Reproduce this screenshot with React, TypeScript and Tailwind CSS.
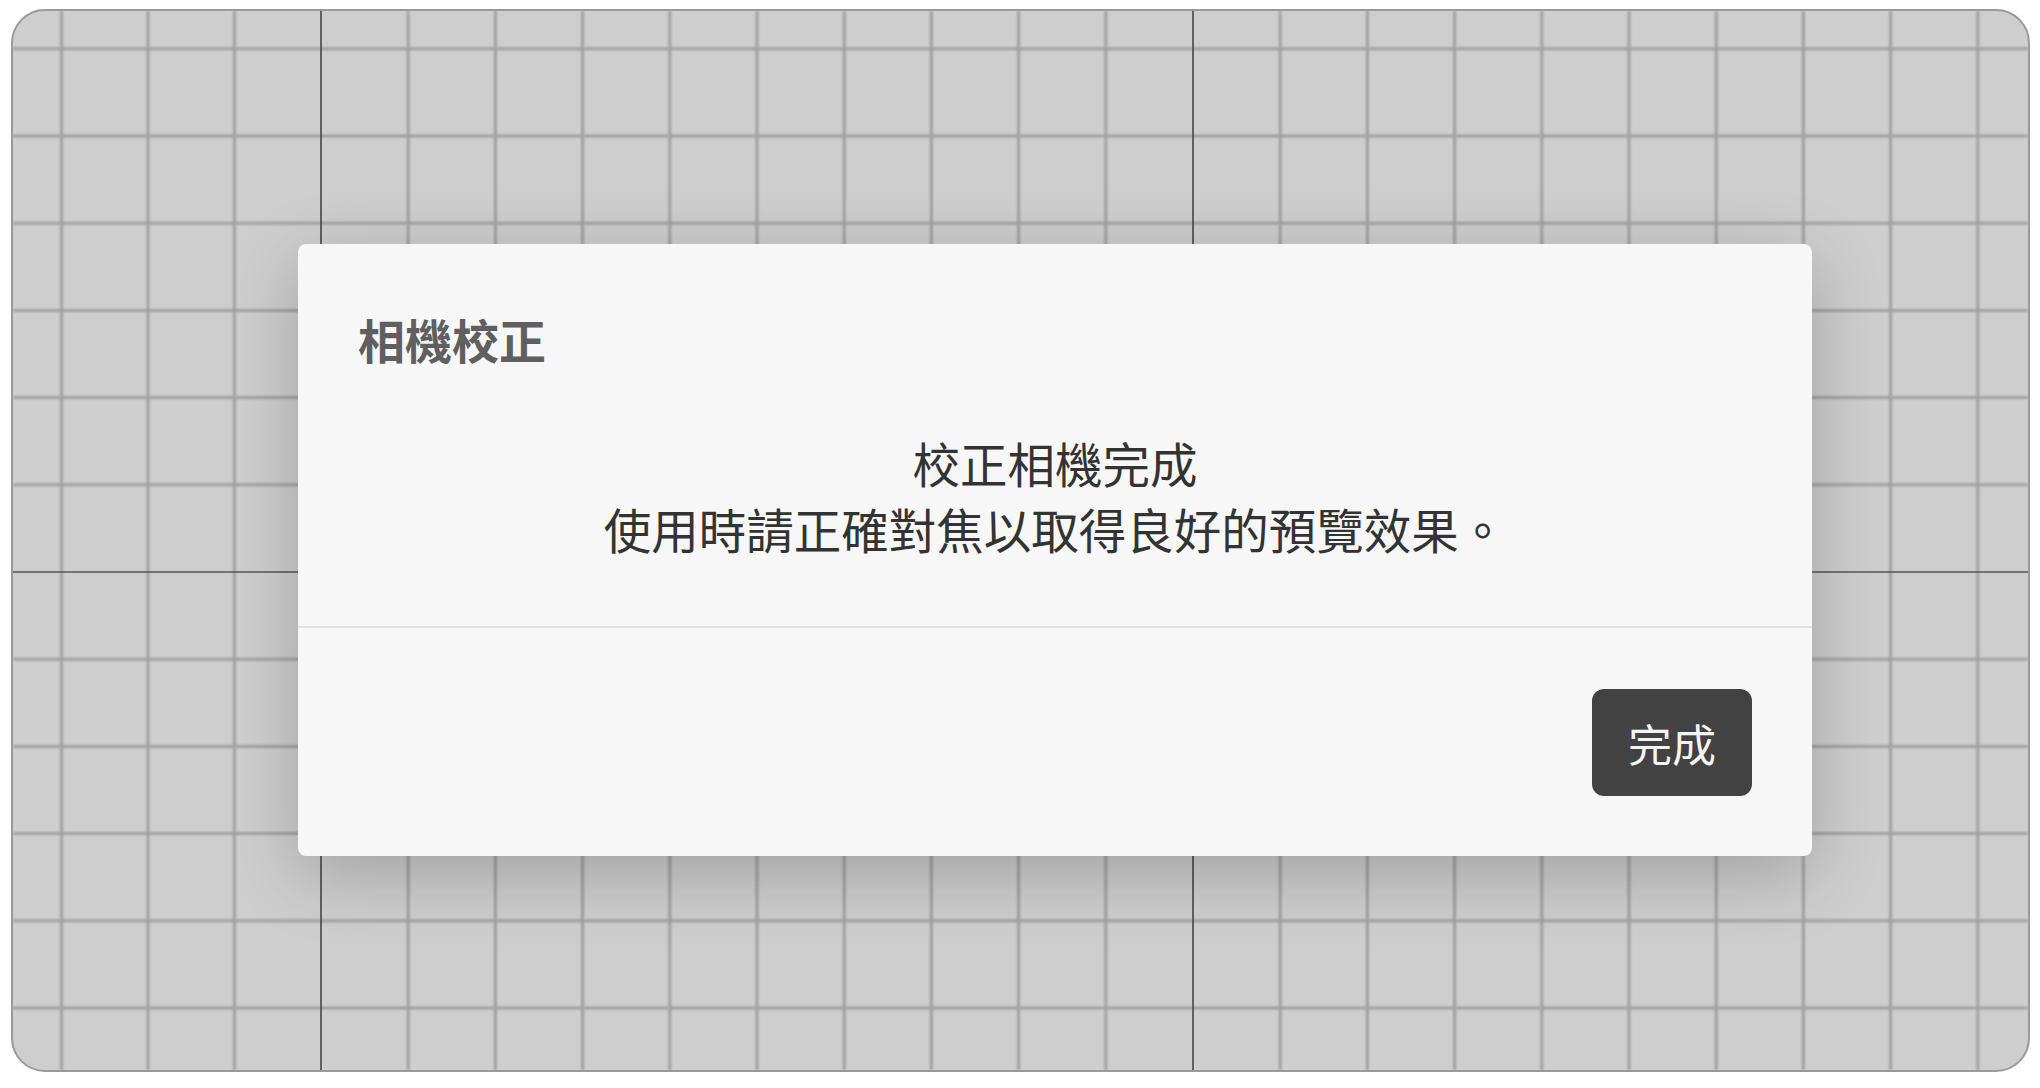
import React from "react";

const CELL = 87.2;
const FRAME_W = 2015;
const FRAME_H = 1059;
// grid origin inside the frame (major lines)
const MAJOR_X = 308;
const MAJOR_Y = 561;

function GridCanvas() {
  const verticals: { x: number; major: boolean }[] = [];
  for (let k = -4; k <= 20; k++) {
    // the columns left of the first major line are a touch narrower
    const x = k < 0 ? MAJOR_X + k * 86.5 : MAJOR_X + k * CELL;
    if (x > 0 && x < FRAME_W) verticals.push({ x, major: k === 0 || k === 10 });
  }
  const horizontals: { y: number; major: boolean }[] = [];
  for (let k = -7; k <= 6; k++) {
    const y = MAJOR_Y + k * CELL;
    if (y > 0 && y < FRAME_H) horizontals.push({ y, major: k === 0 });
  }

  return (
    <svg
      className="absolute inset-0"
      width={FRAME_W}
      height={FRAME_H}
      viewBox={`0 0 ${FRAME_W} ${FRAME_H}`}
    >
      <defs>
        <filter id="soft" x="-5%" y="-5%" width="110%" height="110%">
          <feGaussianBlur stdDeviation="0.9" />
        </filter>
      </defs>
      <g filter="url(#soft)">
        {verticals
          .filter((v) => !v.major)
          .map((v) => (
            <line key={`v${v.x}`} x1={v.x} y1={0} x2={v.x} y2={FRAME_H} stroke="#a0a0a0" strokeWidth={3} />
          ))}
        {horizontals
          .filter((h) => !h.major)
          .map((h) => (
            <line key={`h${h.y}`} x1={0} y1={h.y} x2={FRAME_W} y2={h.y} stroke="#a0a0a0" strokeWidth={3} />
          ))}
      </g>
      {verticals
        .filter((v) => v.major)
        .map((v) => (
          <line key={`mv${v.x}`} x1={v.x} y1={0} x2={v.x} y2={FRAME_H} stroke="#474747" strokeWidth={1.6} />
        ))}
      {horizontals
        .filter((h) => h.major)
        .map((h) => (
          <line key={`mh${h.y}`} x1={0} y1={h.y} x2={FRAME_W} y2={h.y} stroke="#555555" strokeWidth={1.6} />
        ))}
    </svg>
  );
}

export default function App() {
  return (
    <div
      className="w-[2040px] h-[1088px] bg-white pl-[11px] pt-[9px]"
      style={{ fontFamily: '"Noto Sans CJK TC", "Noto Sans", sans-serif' }}
    >
      {/* Canvas frame */}
      <div className="relative w-[2019px] h-[1063px] rounded-[34px] border-2 border-[#9a9a9a] bg-[#cecece] overflow-hidden">
        <GridCanvas />

        {/* Dialog */}
        <div className="absolute inset-0 pl-[285px] pt-[233px]">
          <div className="w-[1514px] rounded-[8px] bg-[#f7f7f7] shadow-[0_18px_70px_rgba(0,0,0,0.22)]">
            <div className="px-[60px] pt-[62px] pb-[64px] border-b-2 border-[#e2e2e2]">
              <h2 className="text-[47px] leading-[66px] font-bold text-[#5f5f5f]">相機校正</h2>
              <div className="mt-[58px] text-center text-[47.5px] leading-[66px] text-[#333333]">
                <p>校正相機完成</p>
                <p>使用時請正確對焦以取得良好的預覽效果。</p>
              </div>
            </div>
            <div className="flex justify-end pt-[61px] pb-[60px] pr-[60px]">
              <button className="w-[160px] h-[107px] rounded-[12px] bg-[#424242] text-[44px] text-[#f4f4f4] flex items-center justify-center">
                完成
              </button>
            </div>
          </div>
        </div>
      </div>
    </div>
  );
}
